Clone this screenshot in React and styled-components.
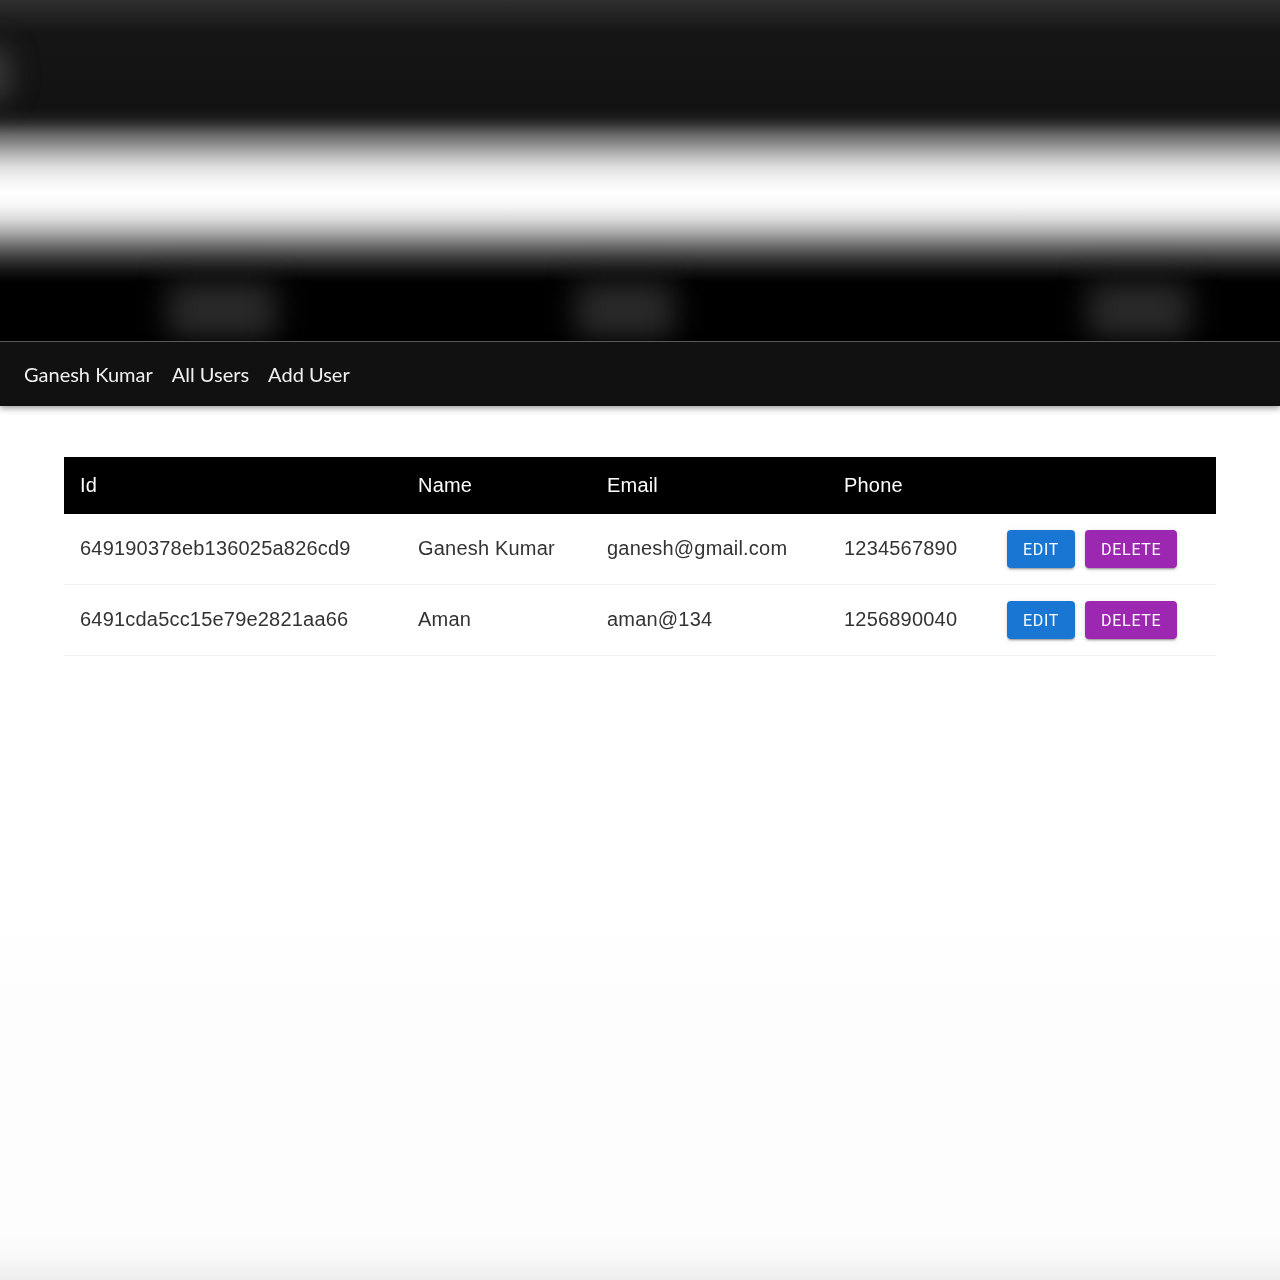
import React from "react";
import styled, { createGlobalStyle } from "styled-components";

const GlobalStyle = createGlobalStyle`
  html, body {
    margin: 0;
    padding: 0;
  }
  body {
    min-height: 1280px;
    background: linear-gradient(
      to bottom,
      #ffffff 0,
      #ffffff 900px,
      #fdfdfd 1000px,
      #fdfdfd 1235px,
      #f9f9f9 1255px,
      #ededed 1280px
    );
    font-family: "Liberation Sans", Arial, sans-serif;
  }
`;

const users = [
  { _id: "649190378eb136025a826cd9", name: "Ganesh Kumar", email: "ganesh@gmail.com", phone: "1234567890" },
  { _id: "6491cda5cc15e79e2821aa66", name: "Aman", email: "aman@134", phone: "1256890040" },
];

export default function App() {
  return (
    <>
      <GlobalStyle />
      <BlurredHeader>
        <EdgeSmudge />
        <SmudgeRow>
          <Smudge $left={168} $width={108} />
          <Smudge $left={576} $width={98} />
          <Smudge $left={1088} $width={102} />
        </SmudgeRow>
      </BlurredHeader>
      <NavBar>
        <NavLink href="#">Ganesh Kumar</NavLink>
        <NavLink href="#">All Users</NavLink>
        <NavLink href="#">Add User</NavLink>
      </NavBar>
      <Content>
        <UserTable>
          <colgroup>
            <col width="338" />
            <col width="189" />
            <col width="237" />
            <col width="163" />
            <col />
          </colgroup>
          <thead>
            <HeadRow>
              <HeadCell>Id</HeadCell>
              <HeadCell>Name</HeadCell>
              <HeadCell>Email</HeadCell>
              <HeadCell>Phone</HeadCell>
              <HeadCell />
            </HeadRow>
          </thead>
          <tbody>
            {users.map((user) => (
              <tr key={user._id}>
                <Cell>{user._id}</Cell>
                <Cell>{user.name}</Cell>
                <Cell>{user.email}</Cell>
                <Cell>{user.phone}</Cell>
                <Cell>
                  <Actions>
                    <ActionButton $color="#1976d2">Edit</ActionButton>
                    <ActionButton $color="#9c27b0">Delete</ActionButton>
                  </Actions>
                </Cell>
              </tr>
            ))}
          </tbody>
        </UserTable>
      </Content>
    </>
  );
}

//the top of the shot is a heavily blurred page, so it is all gradients
const BlurredHeader = styled.div`
  position: relative;
  height: 342px;
  overflow: hidden;
  background: linear-gradient(
    to bottom,
    #2f2f2f 0,
    #232323 14px,
    #151515 34px,
    #121212 108px,
    #1c1c1c 117px,
    #333333 124px,
    #666666 134px,
    #909090 145px,
    #bcbcbc 156px,
    #dedede 167px,
    #f3f3f3 180px,
    #ffffff 193px,
    #f5f5f5 207px,
    #d8d8d8 220px,
    #a8a8a8 233px,
    #6c6c6c 246px,
    #383838 259px,
    #141414 271px,
    #000000 282px,
    #000000 342px
  );
`;

const EdgeSmudge = styled.div`
  position: absolute;
  left: -24px;
  top: 44px;
  width: 36px;
  height: 60px;
  border-radius: 50%;
  background: #383838;
  filter: blur(13px);
`;

const SmudgeRow = styled.div`
  position: absolute;
  left: 0;
  right: 0;
  bottom: 0;
  height: 70px;
`;

const Smudge = styled.div`
  position: absolute;
  left: ${(p) => p.$left}px;
  top: 10px;
  width: ${(p) => p.$width}px;
  height: 56px;
  background: #2a2a2a;
  filter: blur(15px);
`;

const NavBar = styled.nav`
  position: relative;
  box-sizing: border-box;
  display: flex;
  align-items: center;
  gap: 19px;
  height: 65px;
  padding: 0 24px;
  margin-top: -1px;
  background: #111111;
  border-top: 1px solid #585858;
  box-shadow: 0 2px 4px -1px rgba(0, 0, 0, 0.2), 0 4px 5px 0 rgba(0, 0, 0, 0.14), 0 1px 10px 0 rgba(0, 0, 0, 0.12);
`;

const NavLink = styled.a`
  color: #f0f0f0;
  font-family: Lato, sans-serif;
  font-size: 20px;
  line-height: 28px;
  text-decoration: none;
  filter: blur(0.4px);
`;

const Content = styled.main`
  padding: 51px 64px 0;
  filter: blur(0.5px);
`;

const UserTable = styled.table`
  width: 1152px;
  table-layout: fixed;
  border-collapse: separate;
  border-spacing: 0;
`;

const HeadRow = styled.tr`
  height: 57px;
  background: #000000;
`;

const HeadCell = styled.th`
  padding: 0 16px;
  color: #ffffff;
  font-size: 20px;
  font-weight: 400;
  letter-spacing: 0.2px;
  text-align: left;
`;

const Cell = styled.td`
  height: 71px;
  padding: 0 16px 2px;
  box-sizing: border-box;
  color: #333333;
  font-size: 20px;
  letter-spacing: 0.2px;
  border-bottom: 1px solid #f0f0f0;
  white-space: nowrap;
`;

const Actions = styled.div`
  display: flex;
  gap: 10px;
  padding-top: 2px;
`;

const ActionButton = styled.button`
  height: 38px;
  padding: 0 16px;
  border: 0;
  border-radius: 4px;
  color: #ffffff;
  background: ${(p) => p.$color};
  font-family: Roboto, sans-serif;
  font-size: 16px;
  font-weight: 400;
  letter-spacing: 0.7px;
  text-transform: uppercase;
  box-shadow: 0 3px 1px -2px rgba(0, 0, 0, 0.2), 0 2px 2px 0 rgba(0, 0, 0, 0.14), 0 1px 5px 0 rgba(0, 0, 0, 0.12);
  cursor: pointer;
`;
